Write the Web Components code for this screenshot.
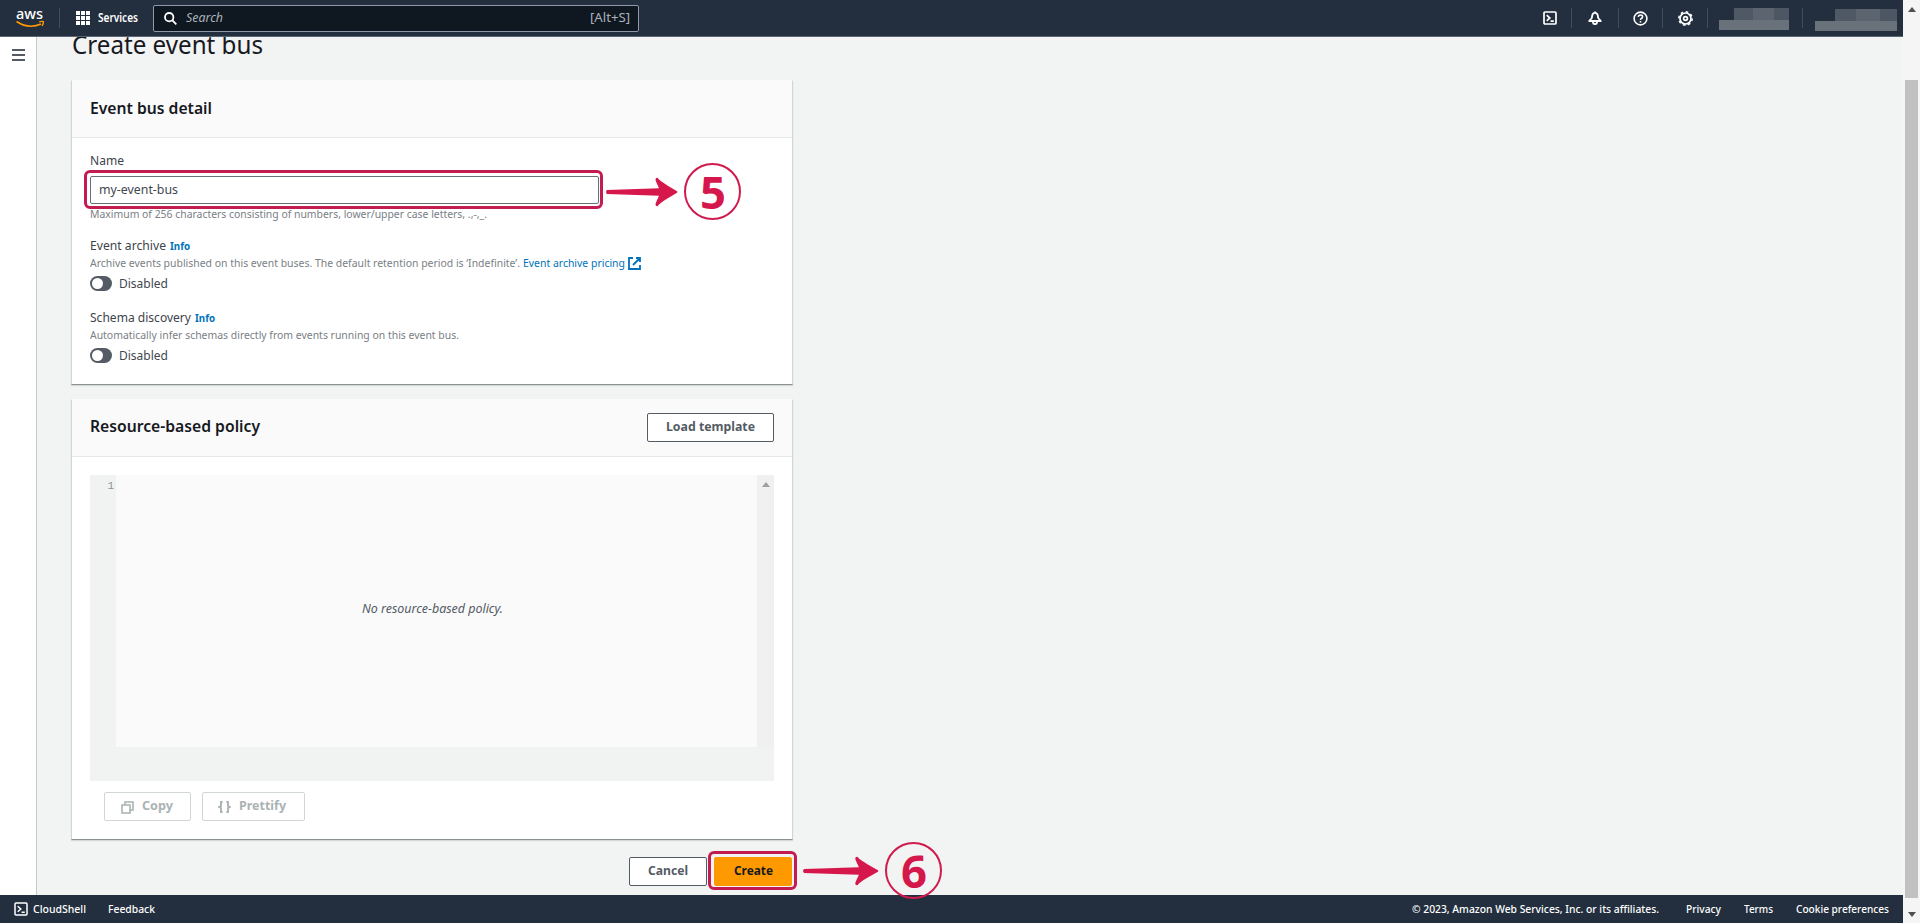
<!DOCTYPE html>
<html lang="en">
<head>
<meta charset="utf-8">
<title>Create event bus</title>
<style>
html,body{margin:0;height:100%;overflow:hidden}
body{font-family:"Noto Sans","Open Sans",sans-serif;background:#f2f3f3;color:#16191f}
</style>
</head>
<body>
<console-app></console-app>
<script>
const define = (name, html, setup) => customElements.define(name, class extends HTMLElement {
  constructor() {
    super();
    const t = document.createElement('template');
    t.innerHTML = html;
    this.attachShadow({ mode: 'open' }).append(t.content.cloneNode(true));
  }
  connectedCallback() { if (setup) setup(this, this.shadowRoot); }
});

/* One line of text set to a given advance width (w, in px). */
define('fit-text', `<style>
:host{display:inline-block;flex:none;white-space:nowrap;text-align:left}
span{display:inline-block;transform-origin:0 50%;white-space:nowrap}
</style><span><slot></slot></span>`, (el, root) => {
  const s = root.querySelector('span');
  const w = +el.getAttribute('w');
  s.style.transform = 'none';
  const natural = s.getBoundingClientRect().width;
  el.style.width = w + 'px';
  if (natural) s.style.transform = 'scaleX(' + w / natural + ')';
});

define('nav-divider', `<style>:host{display:block;flex:none;width:1px;height:20px;background:#414d5c}</style>`);

define('masked-label', `<style>
:host{display:block;flex:none;width:var(--w);height:22px}
.a{height:12px;margin-left:var(--in);background:linear-gradient(90deg,#4f5966 0 34%,#5c656f 34% 72%,#4c5763 72%)}
.b{height:10px;background:#69717a}
</style><div class="a"></div><div class="b"></div>`);

define('top-nav', `<style>
:host{display:flex;flex:none;height:37px;background:#232f3e;border-bottom:1px solid #5b6670;align-items:center;color:#fff;box-sizing:border-box;position:relative;z-index:1}
svg{display:block;flex:none}
.logo{margin-left:16px;width:30px;height:20px;overflow:visible}
.d1{margin-left:13px}
.grid{margin-left:16px}
.services{margin:-2px 0 0 8px;font-size:12px;font-weight:600}
.search{margin-left:15px;width:486px;height:27px;box-sizing:border-box;border:1px solid #8d99a8;border-radius:2px;background:#0f1720;display:flex;align-items:center;padding:0 8px 0 10px}
.ph{margin:-2px 0 0 9px;font-size:12.5px;font-style:italic;color:#aab1b9}
.key{margin:-2px 0 0 auto;font-size:12.5px;color:#aab1b9}
.right{margin-left:auto;display:flex;align-items:center;padding-right:6px}
.ic{display:flex;justify-content:center}
</style>
<svg class="logo" viewBox="0 0 30 20"><text x="0" y="11" font-family="Noto Sans" font-weight="500" font-size="14.5" fill="#fff" textLength="27" lengthAdjust="spacingAndGlyphs">aws</text><path d="M.6 13.5 Q12.5 21.5 25 16" fill="none" stroke="#f90" stroke-width="1.7"/><path d="M23.2 13.8 Q25.6 13 27.4 13.6 Q27.6 15.4 26 17.8" fill="none" stroke="#f90" stroke-width="1.4"/></svg>
<nav-divider class="d1"></nav-divider>
<svg class="grid" width="14" height="14" fill="#fff"><path d="M0 0h4v4H0zM5 0h4v4H5zM10 0h4v4h-4zM0 5h4v4H0zM5 5h4v4H5zM10 5h4v4h-4zM0 10h4v4H0zM5 10h4v4H5zM10 10h4v4h-4z"/></svg>
<fit-text class="services" w="40">Services</fit-text>
<div class="search">
<svg width="13" height="13" fill="none" stroke="#fff" stroke-width="1.8"><circle cx="5.2" cy="5.2" r="4.2"/><path d="M8.2 8.2L12.3 12.4"/></svg>
<fit-text class="ph" w="37">Search</fit-text><fit-text class="key" w="40">[Alt+S]</fit-text></div>
<div class="right">
<div class="ic" style="width:43px"><svg width="14" height="14" fill="none" stroke="#fff" stroke-width="1.7"><rect x="1" y="1" width="12" height="12" rx="1"/><path d="M3.7 4.2L6.8 7l-3.1 2.8M7.6 10.2h3.2"/></svg></div>
<nav-divider></nav-divider>
<div class="ic" style="width:46px"><svg width="14" height="14" fill="none" stroke="#fff" stroke-width="1.8" stroke-linejoin="round"><path d="M7 .4V1.6M7 1.6Q4.6 2 4.2 4.6L3.8 7L1.2 10H12.8L10.2 7L9.8 4.6Q9.4 2 7 1.6Z"/><path d="M4.8 11Q5.2 13.2 7 13.2T9.2 11"/></svg></div>
<nav-divider></nav-divider>
<div class="ic" style="width:43px"><svg width="15" height="15" fill="none" stroke="#fff" stroke-width="1.6"><circle cx="7.5" cy="7.5" r="6.4"/><path d="M5.3 5.9Q5.5 4 7.5 4T9.6 5.7Q9.6 6.8 8.3 7.4Q7.5 7.8 7.5 9M7.5 10v1.6"/></svg></div>
<nav-divider></nav-divider>
<div class="ic" style="width:44px"><svg width="15" height="15" viewBox="0 0 15 15" fill="none" stroke="#fff"><circle cx="7.5" cy="7.5" r="5.5" stroke-width="1.7"/><circle cx="7.5" cy="7.5" r="6.7" stroke-width="1.5" stroke-dasharray="2.63 2.63"/><circle cx="7.5" cy="7.5" r="1.9" stroke-width="1.7"/></svg></div>
<nav-divider></nav-divider>
<masked-label style="--w:70px;--in:15px;margin:2px 13px 0 11px"></masked-label>
<nav-divider></nav-divider>
<masked-label style="--w:82px;--in:20px;margin:3px 0 0 12px"></masked-label>
</div>`);

define('side-rail', `<style>
:host{display:block;flex:none;width:36px;background:#fff;border-right:1px solid #c3c8c9}
svg{display:block;margin:12px 0 0 12px}
</style><svg width="13" height="12" fill="#545b64"><path d="M0 0h13v2H0zM0 5h13v2H0zM0 10h13v2H0z"/></svg>`);

define('ui-card', `<style>
:host{display:block;box-sizing:border-box;width:722px;border:1px solid #cfd4d5;border-top-color:#fafafa;border-bottom-color:#8b9292;background:#fff;box-shadow:0 1px 1px rgba(0,28,36,.12)}
header{height:57px;box-sizing:border-box;border-bottom:1px solid #e6e9e9;background:#fafafa;display:flex;align-items:center;justify-content:space-between;padding:0 18px 1px;font-size:15.5px;font-weight:600}
</style><header><slot name="title"></slot><slot name="action"></slot></header><slot></slot>`);

define('ui-button', `<style>
:host{display:flex;flex:none;box-sizing:border-box;height:29px;border:1px solid #545b64;border-radius:2px;background:#fff;color:#545b64;align-items:center;justify-content:center;font-size:13px;font-weight:700;line-height:18px;padding-bottom:3px}
:host([disabled]){border-color:#d0d6d6;color:#aab3b3}
:host([primary]){background:#f90;border-color:#f90;color:#16191f}
</style><slot></slot>`);

define('ui-toggle', `<style>
:host{display:flex;align-items:center;height:16px;font-size:13px;color:#414750}
i{display:block;box-sizing:border-box;width:22px;height:15px;border-radius:8px;background:#545b64;padding:2px;margin:1px 7px 0 0}
i::before{content:"";display:block;width:11px;height:11px;border-radius:50%;background:#fff}
</style><i></i><fit-text w="49">Disabled</fit-text>`);

define('form-field', `<style>
:host{display:block;height:72px}
.l{height:18px;line-height:17px;font-size:13px;color:#3d434b;display:flex;align-items:baseline;gap:4px}
.d{height:15px;line-height:15px;font-size:11px;color:#7a8085;display:flex;margin-bottom:5px}
::slotted([slot=info]){font-size:11px;font-weight:700;color:#0073bb}
</style><div class="l"><slot name="label"></slot><slot name="info"></slot></div><div class="d"><slot name="desc"></slot></div><ui-toggle></ui-toggle>`);

define('text-input', `<style>
:host{display:block;position:relative;box-sizing:border-box;width:509px;height:28px;border:1px solid #687078;border-radius:2px;background:#fff;font-size:13px;line-height:25px;color:#414750;padding-left:8px}
</style><slot></slot>`);

define('focus-frame', `<style>
:host{display:block;position:absolute;box-sizing:border-box;border:3px solid #c31c50;border-radius:6px;z-index:2}
</style>`);

define('step-marker', `<style>
:host{display:flex;position:absolute;align-items:center;z-index:3;color:#d5174b}
.n{box-sizing:border-box;width:57px;height:57px;border:2px solid #cf1b4e;border-radius:50%;display:flex;align-items:center;justify-content:center;font:700 45px/52px "Noto Sans",sans-serif;margin-left:6px}
svg{display:block;width:var(--arrow,73px);height:30px}
</style><svg viewBox="0 0 73 30" preserveAspectRatio="none" fill="#d5174b"><path d="M2 13L54 11.3L51 4.5Q49.5 1 52.5 .8Q55 4 62 8.2L72 14.2Q73 15 72 15.8L62 21.8Q55 26 52.5 29.2Q49.5 29 51 25.5L54 18.7L2 17Q0 15 2 13Z"/></svg><div class="n"><fit-text w="26"><slot></slot></fit-text></div>`);

define('policy-editor', `<style>
:host{display:grid;grid-template-columns:26px 1fr 17px;grid-template-rows:272px 34px;width:684px;background:#f1f3f3}
.g{font:11px/22px "Liberation Mono",monospace;color:#8c9292;text-align:right;padding:0 2px 0 0}
.c{background:#fafafa;display:flex;align-items:center;justify-content:center;font-size:12.5px;font-style:italic;color:#545b64}
.s{background:#f0f0f0;padding:7px 0 0 5px}
svg{display:block}
</style><div class="g">1</div><div class="c"><fit-text w="141" style="margin:-5px 8px 0 0">No resource-based policy.</fit-text></div><div class="s"><svg width="8" height="5" fill="#a0a0a0"><path d="M4 0L8 5H0z"/></svg></div>`);

define('event-form', `<style>
:host{display:block;flex:1;min-width:0;padding-left:34px;position:relative}
h1{margin:0;height:43px;font-size:25px;font-weight:400;line-height:34px;padding:0 0 0 1px;box-sizing:border-box;display:flex;align-items:flex-start}
h1 fit-text{margin-top:-10px}
.body1{height:246px;box-sizing:border-box;padding:13px 18px 0}
.name{font-size:13px;line-height:18px;height:18px;color:#3d434b;margin-bottom:7px}
.hint{height:15px;line-height:15px;font-size:11px;color:#7a8085;margin:2px 0 16px}
.body2{padding:18px 18px 0;height:382px;box-sizing:border-box}
.tools{display:flex;gap:11px;margin:11px 0 0 14px}
.foot{display:flex;gap:7px;width:721px;justify-content:flex-end;margin-top:17px}
.link{color:#0073bb;margin-left:3px}
svg{display:block;flex:none}
</style>
<h1><fit-text w="191">Create event bus</fit-text></h1>
<ui-card><fit-text slot="title" w="122" style="margin-top:-2px">Event bus detail</fit-text>
<div class="body1">
<div class="name"><fit-text w="34">Name</fit-text></div>
<text-input><fit-text w="79">my-event-bus</fit-text></text-input>
<div class="hint"><fit-text w="397">Maximum of 256 characters consisting of numbers, lower/upper case letters, .,-,_.</fit-text></div>
<form-field><fit-text slot="label" w="76">Event archive</fit-text><fit-text slot="info" w="20">Info</fit-text><fit-text slot="desc" w="430">Archive events published on this event buses. The default retention period is ‘Indefinite’.</fit-text><fit-text slot="desc" class="link" w="102">Event archive pricing</fit-text><svg slot="desc" style="margin:2px 0 0 3px" width="13" height="13" fill="none" stroke="#0073bb" stroke-width="1.8"><path d="M5 1H1v11h11V8M8 1h4v4M12 1L5 8"/></svg></form-field>
<form-field><fit-text slot="label" w="101">Schema discovery</fit-text><fit-text slot="info" w="20">Info</fit-text><fit-text slot="desc" w="369">Automatically infer schemas directly from events running on this event bus.</fit-text></form-field>
</div></ui-card>
<ui-card style="margin-top:14px"><fit-text slot="title" w="170" style="margin-top:-3px">Resource-based policy</fit-text><ui-button slot="action" style="width:127px"><fit-text w="89">Load template</fit-text></ui-button>
<div class="body2"><policy-editor></policy-editor>
<div class="tools">
<ui-button disabled style="width:87px;gap:8px;padding-right:2px"><svg width="13" height="13" fill="none" stroke="#aab3b3" stroke-width="1.6" style="margin-top:4px"><path d="M1 4h8v8H1zM4 4V1h8v8H9"/></svg><fit-text w="31">Copy</fit-text></ui-button>
<ui-button disabled style="width:103px;gap:8px;padding-right:3px"><svg width="13" height="12" fill="none" stroke="#aab3b3" stroke-width="1.9" style="margin-top:4px"><path d="M4.6 1H3V5L1.2 6L3 7V11H4.6M8.4 1H10V5L11.8 6L10 7V11H8.4"/></svg><fit-text w="47">Prettify</fit-text></ui-button>
</div></div></ui-card>
<div class="foot"><ui-button style="width:78px"><fit-text w="40">Cancel</fit-text></ui-button><ui-button primary style="width:78px"><fit-text w="39">Create</fit-text></ui-button></div>
<focus-frame style="left:47px;top:133px;width:519px;height:39px"></focus-frame>
<focus-frame style="left:671px;top:814px;width:89px;height:39px"></focus-frame>
<step-marker style="left:568px;top:126px">5</step-marker>
<step-marker style="left:765px;top:805px;--arrow:77px">6</step-marker>`);

define('page-footer', `<style>
:host{display:flex;flex:none;box-sizing:border-box;height:28px;background:#232f3e;color:#fff;align-items:center;font-size:11px;font-weight:500;padding:0 14px 2px}
svg{display:block;margin-top:2px}
.cs{margin-left:5px}.fb{margin-left:22px}.c{margin-left:auto}.p{margin-left:27px}.t{margin-left:23px}
</style><svg width="14" height="14" fill="none" stroke="#fff" stroke-width="1.5"><rect x="1" y="1" width="12" height="12" rx="1"/><path d="M3.7 4.2L6.8 7l-3.1 2.8M7.6 10.2h3.2"/></svg>
<fit-text class="cs" w="53">CloudShell</fit-text><fit-text class="fb" w="47">Feedback</fit-text>
<fit-text class="c" w="247">© 2023, Amazon Web Services, Inc. or its affiliates.</fit-text><fit-text class="p" w="35">Privacy</fit-text><fit-text class="t" w="29">Terms</fit-text><fit-text class="t" w="93">Cookie preferences</fit-text>`);

define('scroll-bar', `<style>
:host{display:flex;flex:none;flex-direction:column;align-items:center;width:17px;background:#f5f5f5}
.th{width:13px;height:818px;background:#c1c1c1;margin-top:68px}
.up{margin-top:7px}.dn{margin-top:14px}
svg{display:block}
</style><svg class="up" width="8" height="5" fill="#505050"><path d="M4 0L8 5H0z"/></svg><div class="th"></div><svg class="dn" width="8" height="5" fill="#505050"><path d="M0 0h8L4 5z"/></svg>`);

define('console-app', `<style>
:host{display:flex;width:1920px;height:923px;overflow:hidden}
.page{flex:1;min-width:0;display:flex;flex-direction:column}
.main{flex:1;min-height:0;display:flex;background:#f2f3f3}
.clip{flex:1;display:flex;min-width:0}
</style><div class="page"><top-nav></top-nav><div class="main"><side-rail></side-rail><div class="clip"><event-form></event-form></div></div><page-footer></page-footer></div><scroll-bar></scroll-bar>`);
</script>
</body>
</html>
